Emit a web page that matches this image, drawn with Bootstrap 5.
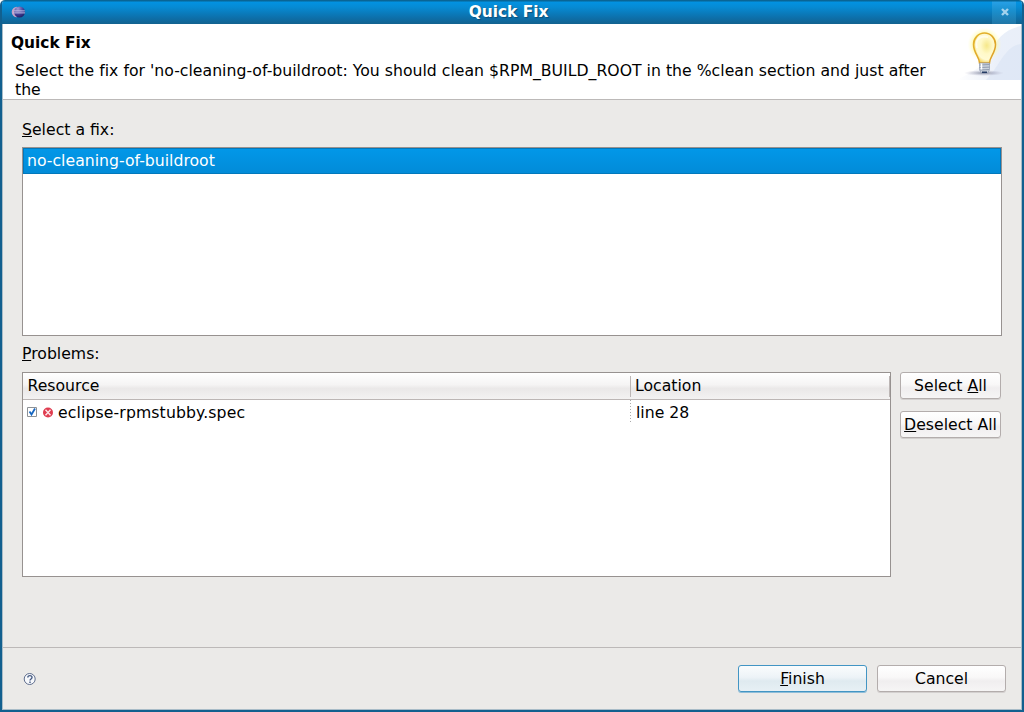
<!DOCTYPE html>
<html lang="en">
<head>
<meta charset="utf-8">
<title>Quick Fix</title>
<link href="https://cdn.jsdelivr.net/npm/bootstrap@5.3.0/dist/css/bootstrap.min.css" rel="stylesheet">
<style>
body{margin:0;background:#fff;font:15.7px/19px "DejaVu Sans",sans-serif;color:#000;overflow:hidden}
.window{width:1024px;height:712px;border:solid #12608f;border-width:0 2px 2px;border-radius:5px 5px 0 0;overflow:hidden;background:#ebeae8;box-shadow:inset 1px -1px #a9bcc7,inset -1px 0 #a9bcc7}
.titlebar{height:24px;background:linear-gradient(#096595 0,#096595 1px,#0292e2 2px,#068bd4 7px,#0d6fa9 18px,#13628f 24px);color:#fff;flex:none}
.titlebar .caption{font-weight:700;font-size:15.4px;line-height:24px;text-shadow:1px 1px 1px #0b4e78;padding-right:5px}
.close-btn{width:24px;height:24px;background:linear-gradient(#096595 0,#096595 1px,#26a0e6 2px,#1a91d0 10px,#2176a6 24px);margin-right:6px;padding-left:2px}
.heading{height:76px;background:#fff;border-bottom:1px solid #bcb9b8;margin:0 1px;flex:none}
.heading h1{font-size:15.4px;line-height:19px;font-weight:700;margin:10px 0 8px 8px}
.heading p{margin:0 0 0 12px;width:930px;letter-spacing:.01px}
.u{text-decoration:underline;text-decoration-thickness:1px;text-underline-offset:1px}
.content{padding:20px 20px 0}
.fixes{height:189px;border:1px solid #979290;background:#fff;margin-top:8px}
.fix-item{height:26px;line-height:24px;color:#fff;background:linear-gradient(#0297e8,#028bd8);border:1px solid #0278bb;padding-left:3px}
.problems{width:869px;height:205px;border:1px solid #979290;background:#fff}
.head-row{height:27px;line-height:26px;background:linear-gradient(#fff 0,#f5f4f4 45%,#eae8e8 60%,#f3f2f2 100%);border-bottom:1px solid #bcb6b5}
.c1{width:607px;flex:none}
.head-row .c1{padding-left:4.5px}
.row-file{line-height:25px}
.file-name{letter-spacing:.11px}
.vsep{width:1px;height:21px;background:#bcb6b5;margin-top:3px}
.dots{width:1px;height:23px;background:repeating-linear-gradient(#aaa 0 1px,#fff 1px 3px)}
.dlg-btn{--bs-btn-padding-x:0;--bs-btn-padding-y:0;--bs-btn-font-size:15.7px;--bs-btn-line-height:25px;--bs-btn-border-radius:3px;--bs-btn-color:#000;--bs-btn-border-color:#b3adac;height:27px;background:linear-gradient(#fff 0,#f9f8f8 45%,#f0eeef 60%,#f6f5f5 100%);box-shadow:0 1px #d3d0cf;white-space:nowrap}
.side{width:101px;gap:12px;margin-right:1px}
.foot-btn{width:129px}
.primary{--bs-btn-border-color:#4295c4;background:linear-gradient(#fafcfd 0,#edf3f7 45%,#dfeaf0 60%,#e7f0f5 100%);box-shadow:0 1px #8fbdd8}
.footer-bar{height:63px;border-top:1px solid #bcb9b8;margin:0 1px;padding:17px 15px 0 20px}
.footer-bar .d-flex{gap:10px}
</style>
</head>
<body>
<main class="window d-flex flex-column">
 <header class="titlebar d-flex">
  <svg width="24" height="24" viewBox="0 0 24 24" class="ms-1 flex-shrink-0"><defs><radialGradient id="orb" cx=".35" cy=".2" r=".8"><stop stop-color="#a39ad2"/><stop offset=".6" stop-color="#45419a"/><stop offset="1" stop-color="#242269"/></radialGradient></defs><path d="M11 6.700a5.300 5.300 0 1 0 0 10.600" fill="#c4a3c9"/><circle cx="13.500" cy="12" r="5.500" fill="url(#orb)"/><path d="M8 10.900h10.800M7.500 12.900h11.500" stroke="#c7ceed" stroke-width=".9"/></svg>
  <div class="caption flex-grow-1 text-center">Quick Fix</div>
  <div class="close-btn d-flex justify-content-center align-items-center"><svg width="8" height="8" viewBox="0 0 8 8"><path d="M1 1l6 6M7 1L1 7" stroke="#a4d3ed" stroke-width="2.400"/></svg></div>
 </header>
 <section class="heading d-flex justify-content-between">
  <div><h1>Quick Fix</h1><p>Select the fix for 'no-cleaning-of-buildroot: You should clean $RPM_BUILD_ROOT in the %clean section and just after the</p></div>
  <svg width="64" height="56" viewBox="0 0 64 56" class="flex-shrink-0"><defs>
   <linearGradient id="sky" x1="0" x2="1"><stop stop-color="#dce5f5" stop-opacity="0"/><stop offset=".65" stop-color="#dce5f5"/><stop offset="1" stop-color="#dbe4f5"/></linearGradient>
   <radialGradient id="halo"><stop offset=".55" stop-color="#fff67a"/><stop offset=".76" stop-color="#fffa9d" stop-opacity=".7"/><stop offset="1" stop-color="#fffccb" stop-opacity="0"/></radialGradient>
   <radialGradient id="glass" cx=".6" cy=".42" r=".62"><stop stop-color="#f6e88a"/><stop offset=".45" stop-color="#fff9c8"/><stop offset=".75" stop-color="#fffbd4"/><stop offset="1" stop-color="#f3cf50"/></radialGradient>
   <linearGradient id="rim" x1="0" y1="0" x2="1" y2="1"><stop stop-color="#e3b52c"/><stop offset="1" stop-color="#dd9d27"/></linearGradient>
   <radialGradient id="shade"><stop stop-color="#737b91" stop-opacity=".8"/><stop offset="1" stop-color="#a9a6c0" stop-opacity="0"/></radialGradient></defs>
   <path d="M64 2C48 5 39 15 34 28C30 41 15 48 0 56H64Z" fill="url(#sky)" opacity=".6"/><path d="M64 20C48 22 43 42 29 56H64Z" fill="#d9e3f4" opacity=".6"/>
   <ellipse cx="27" cy="49" rx="20" ry="3" fill="url(#shade)"/>
   <circle cx="27.500" cy="20.500" r="17" fill="url(#halo)" opacity=".65"/>
   <path d="M22.500 39C22.500 33 16.500 29 16.500 20.500a11 11.500 0 0 1 22 0C38.500 29 32.500 33 32.500 39Z" fill="url(#glass)" stroke="url(#rim)" stroke-width="1.500"/>
   <path d="M20 24C17 16 23 11 31 13" fill="none" stroke="#fff" stroke-width="2" opacity=".6"/>
   <path d="M22.500 39h10v7l-2 3h-6l-2-3z" fill="#ccd4de" stroke="#8792a9" stroke-width=".6"/><path d="M22.500 41l10-.4M22.500 43.500l10-.4M23 46l9-.4" stroke="#7c89a0" stroke-width=".8"/><path d="M25 47.500h5v1.500h-5z" fill="#243b65"/><path d="M24.500 39.500v6" stroke="#fff" stroke-width="1.500"/>
  </svg>
 </section>
 <section class="content flex-grow-1 d-flex flex-column">
  <div><span class="u">S</span>elect a fix:</div>
  <div class="fixes"><div class="fix-item">no-cleaning-of-buildroot</div></div>
  <div class="mt-2"><span class="u">P</span>roblems:</div>
  <div class="d-flex justify-content-between" style="margin-top:9px">
   <div class="problems">
    <div class="head-row d-flex"><div class="c1">Resource</div><span class="vsep"></span><span class="ps-1">Location</span><span class="vsep ms-auto"></span></div>
    <div class="row-file d-flex"><div class="c1 d-flex align-items-center">
     <svg width="35" height="25" viewBox="0 0 35 25" class="flex-shrink-0"><path d="M4.500 7.500h9v9h-9z" fill="#fff" stroke="#8e9296"/><path d="M6.500 11.500l2 3L12 8.500" fill="none" stroke="#1767c1" stroke-width="1.800"/><circle cx="25" cy="12.500" r="5" fill="#df3d50"/><path d="M22.500 9.800l5 5.500M27.500 9.800l-5 5.500" stroke="#ffe6e8" stroke-width="1.400"/></svg><span class="file-name">eclipse-rpmstubby.spec</span></div><span class="dots"></span><span style="padding-left:5px">line 28</span></div>
   </div>
   <div class="side d-flex flex-column"><button class="btn dlg-btn">Select <span class="u">A</span>ll</button><button class="btn dlg-btn"><span class="u">D</span>eselect All</button></div>
  </div>
 </section>
 <footer class="footer-bar d-flex">
  <svg width="14" height="14" viewBox="0 0 14 14" style="margin-top:7px"><circle cx="6.700" cy="7" r="5.500" fill="#f7f9fc" stroke="#5e6d8d"/><path d="M4.800 5.500C4.800 3 9 3 9 5.400C9 7 7 7 7 8.600M7 9.500v1.400" fill="none" stroke="#455a82" stroke-width="1.400"/></svg>
  <div class="ms-auto d-flex"><button class="btn dlg-btn foot-btn primary"><span class="u">F</span>inish</button><button class="btn dlg-btn foot-btn">Cancel</button></div>
 </footer>
</main>
<script src="https://cdn.jsdelivr.net/npm/bootstrap@5.3.0/dist/js/bootstrap.bundle.min.js"></script>
</body>
</html>
